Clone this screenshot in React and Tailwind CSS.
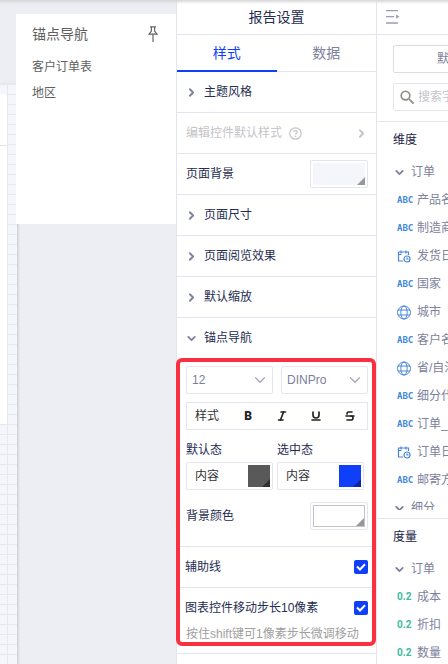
import React from "react";
import { ChevronDown, ChevronRight, Italic, Strikethrough, Underline } from "lucide-react";
import { MdSearch } from "react-icons/md";

function PinIcon() {
  return (
    <svg width="10" height="16" viewBox="0 0 10 16" fill="none" stroke="#666" strokeWidth="1.2" aria-hidden="true">
      <path d="M2 .8h6M3.400 1v4L1 8.200h8L6.600 5V1M5 8.500V16" />
    </svg>
  );
}

function CollapseIcon() {
  return (
    <svg width="14" height="14" viewBox="0 0 14 14" fill="none" stroke="#9a9cb2" strokeWidth="1.3" aria-hidden="true">
      <path d="M0 .7h12M0 6.700h8M0 13h12" />
      <path d="M10.200 4.400l3.200 2.200-3.200 2.200z" fill="#9a9cb2" stroke="none" />
    </svg>
  );
}

function GlobeIcon() {
  return (
    <svg width="15" height="15" viewBox="0 0 15 15" fill="none" stroke="#4a86d8" strokeWidth="1" aria-hidden="true">
      <circle cx="7" cy="7.500" r="6.500" />
      <ellipse cx="7" cy="7.500" rx="3.200" ry="6.500" />
      <path d="M1 5h12M1 10h12" />
    </svg>
  );
}

function DateIcon() {
  return (
    <svg width="14" height="13" viewBox="0 0 14 13" fill="none" stroke="#4a86d8" strokeWidth="1.2" aria-hidden="true">
      <path d="M6 11H1.500V2h10v3M1.500 4.500h3M4 .5v3M9 .5v3" />
      <circle cx="10" cy="9" r="3" />
      <path d="M10 7.500V9h1.500" />
    </svg>
  );
}

function HelpIcon() {
  return (
    <svg width="13" height="13" viewBox="0 0 13 13" fill="none" stroke="#c4c4c8" strokeWidth="1.2" aria-hidden="true">
      <circle cx="6.500" cy="6.500" r="5.700" />
      <path d="M4.800 5.300c0-2.300 3.400-2.200 3.400-.2 0 1.200-1.700 1.200-1.700 2.500M6.500 8.800v1.200" />
    </svg>
  );
}

function Section({ label, open }) {
  const Arrow = open ? ChevronDown : ChevronRight;
  return (
    <button
      type="button"
      aria-expanded={Boolean(open)}
      className={
        "flex h-[41px] w-full items-center gap-1.5 border-b px-2 text-left " +
        (open ? "border-transparent" : "border-[#e5e5f0]")
      }
    >
      <Arrow size={13} strokeWidth={3.4} color="#7c819c" />
      <span>{label}</span>
    </button>
  );
}

function Swatch({ label, fill }) {
  return (
    <button type="button" aria-label={label} className="h-7 w-[58px] rounded-xs border border-[#e5e5f0] p-0.5">
      <span className={"flex h-full items-end justify-end " + fill}>
        <span className="size-2 bg-[#979797] [clip-path:polygon(100%_0,100%_100%,0_100%)]" />
      </span>
    </button>
  );
}

function StateColor({ title, fill, corner }) {
  return (
    <div className="w-[87px]">
      <div className="h-6 leading-6">{title}</div>
      <button
        type="button"
        className="flex h-7 w-full items-center justify-between rounded-xs border border-[#e5e5f0] pr-0.5 pl-2 text-[#333]"
      >
        <span>内容</span>
        <span className={"flex size-[22px] items-end justify-end " + fill}>
          <span className={"size-2 [clip-path:polygon(100%_0,100%_100%,0_100%)] " + corner} />
        </span>
      </button>
    </div>
  );
}

function SelectBox({ label, value }) {
  return (
    <label className="grid h-7 w-[87px] items-center rounded-xs border border-[#e5e5f0]">
      <select
        aria-label={label}
        defaultValue={value}
        className="col-start-1 row-start-1 h-full appearance-none bg-transparent px-[5px] text-[#7c819c] outline-none"
      >
        <option>{value}</option>
      </select>
      <ChevronDown
        size={18}
        strokeWidth={1.6}
        color="#a4a6b6"
        className="pointer-events-none col-start-1 row-start-1 mr-[3px] justify-self-end"
      />
    </label>
  );
}

function CheckRow({ id, label }) {
  return (
    <div className="flex h-10 items-center justify-between pr-2 pl-2">
      <label htmlFor={id}>{label}</label>
      <span className="grid size-3.5 place-items-center">
        <input
          id={id}
          type="checkbox"
          defaultChecked
          className="col-start-1 row-start-1 size-3.5 appearance-none rounded-xs bg-[#103ffa]"
        />
        <svg
          width="10"
          height="8"
          viewBox="0 0 10 8"
          fill="none"
          stroke="#fff"
          strokeWidth="2"
          className="pointer-events-none col-start-1 row-start-1"
          aria-hidden="true"
        >
          <path d="M1 3.500l3 3L9 1.300" />
        </svg>
      </span>
    </div>
  );
}

const formats = [
  ["斜体", Italic],
  ["下划线", Underline],
  ["删除线", Strikethrough],
];

const dimensions = [
  ["abc", "产品名称"],
  ["abc", "制造商"],
  ["date", "发货日期"],
  ["abc", "国家"],
  ["geo", "城市"],
  ["abc", "客户名称"],
  ["geo", "省/自治区"],
  ["abc", "细分代码"],
  ["abc", "订单_ID"],
  ["date", "订单日期"],
  ["abc", "邮寄方式"],
];

function FieldIcon({ kind }) {
  if (kind === "geo") return <GlobeIcon />;
  if (kind === "date") return <DateIcon />;
  if (kind === "num") return <span className="font-['Roboto'] text-[10px] font-bold text-[#3ebba0]">0.2</span>;
  return <span className="font-['DejaVu_Sans_Mono',monospace] text-[9px] font-bold text-[#3f88da]">ABC</span>;
}

function Field({ kind, name }) {
  return (
    <li className="flex h-7 items-center pl-5">
      <span className="flex w-5 shrink-0">
        <FieldIcon kind={kind} />
      </span>
      {name}
    </li>
  );
}

function Group({ name }) {
  return (
    <button type="button" className="flex h-7 w-full items-center gap-[5px] pl-4">
      <ChevronDown size={13} strokeWidth={3.4} color="#7c819c" />
      {name}
    </button>
  );
}

function Canvas() {
  return (
    <main className="relative overflow-hidden bg-[#edeef3] pt-[84px]">
      <div className="h-full w-[18px] border-r border-[#d3d4d9] bg-[#f5f6fb] bg-[linear-gradient(#e7e8ed_1px,transparent_1px),linear-gradient(90deg,#e7e8ed_1px,transparent_1px)] bg-size-[10px_10px] bg-position-[7px_0px] pt-2.5 shadow-[1px_0_2px_#d8d9df]">
        <div className="h-[330px] w-[7px] rounded-r-xs bg-white pt-[51px]">
          <div className="h-px bg-[#e3e3e6]" />
        </div>
      </div>
      <aside className="absolute top-3.5 right-0 left-4 h-[210px] bg-white px-4 pt-2 text-[#606060]">
        <div className="flex h-6 items-center justify-between pr-0.5 text-sm">
          <h2>锚点导航</h2>
          <button type="button" aria-label="固定">
            <PinIcon />
          </button>
        </div>
        <nav className="flex flex-col pt-2 leading-[26px]">
          <a href="#orders">客户订单表</a>
          <a href="#region">地区</a>
        </nav>
      </aside>
    </main>
  );
}

function Settings() {
  return (
    <section className="overflow-hidden border-x border-[#e5e5f0] bg-white">
      <h1 className="flex h-[35px] items-center justify-center border-b border-[#e5e5f0] text-sm">报告设置</h1>
      <div role="tablist" className="grid h-[37px] grid-cols-2 border-b border-[#e5e5f0] text-sm">
        <button type="button" role="tab" aria-selected="true" className="-mb-px border-b-2 border-[#103ffa] text-[#103ffa]">
          样式
        </button>
        <button type="button" role="tab" aria-selected="false" className="text-[#7c819c]">
          数据
        </button>
      </div>
      <Section label="主题风格" />
      <button
        type="button"
        disabled
        className="flex h-[41px] w-full items-center border-b border-[#e5e5f0] pr-2 pl-[9px] text-[#c4c4c8]"
      >
        <span className="mr-[7px]">编辑控件默认样式</span>
        <HelpIcon />
        <ChevronRight size={13} strokeWidth={3.4} className="ml-auto" />
      </button>
      <div className="flex h-[41px] items-center justify-between border-b border-[#e5e5f0] pr-2 pl-[9px]">
        页面背景
        <Swatch label="页面背景" fill="bg-[#f5f6fb]" />
      </div>
      <Section label="页面尺寸" />
      <Section label="页面阅览效果" />
      <Section label="默认缩放" />
      <Section label="锚点导航" open />
      <div className="border-b border-[#e5e5f0] pt-[7px] pr-2 pb-4 pl-[9px]">
        <div className="flex justify-between">
          <SelectBox label="字号" value="12" />
          <SelectBox label="字体" value="DINPro" />
        </div>
        <div className="mt-2 flex h-7 items-center justify-between border border-[#e5e5f0] pr-[11px] pl-2">
          <span className="text-[#333]">样式</span>
          <div className="flex items-center gap-[22px]">
            <button type="button" aria-label="加粗" className="w-3 font-['Roboto'] font-black text-[#222]">
              B
            </button>
            {formats.map(([name, Icon]) => (
              <button key={name} type="button" aria-label={name}>
                <Icon size={12} strokeWidth={3.3} color="#222" />
              </button>
            ))}
          </div>
        </div>
        <div className="mt-2 flex gap-1">
          <StateColor title="默认态" fill="bg-[#595959]" corner="bg-[#303030]" />
          <StateColor title="选中态" fill="bg-[#103ffa]" corner="bg-[#0c2797]" />
        </div>
        <div className="mt-3 flex items-center justify-between">
          背景颜色
          <Swatch label="背景颜色" fill="border border-[#c4c4c4] bg-white" />
        </div>
      </div>
      <div className="border-b border-[#e5e5f0]">
        <CheckRow id="guides" label="辅助线" />
      </div>
      <div className="border-b border-[#e5e5f0] pb-[9px]">
        <CheckRow id="step" label="图表控件移动步长10像素" />
        <p className="-mt-1 px-[9px] leading-5 whitespace-nowrap text-[#a0a0a0]">按住shift键可1像素步长微调移动</p>
      </div>
    </section>
  );
}

function DataPanel() {
  return (
    <aside className="overflow-hidden bg-white text-[#7c819c]">
      <div className="w-[200px]">
        <div className="flex h-[35px] items-center border-b border-[#e5e5f0] pl-[9px]">
          <button type="button" aria-label="收起">
            <CollapseIcon />
          </button>
        </div>
        <div className="flex flex-col gap-2.5 border-b border-[#e5e5f0] px-4 py-2.5">
          <button type="button" className="h-7 rounded-xs border border-[#dcdce4] pr-2">
            默认分析主题
          </button>
          <label className="flex h-7 items-center gap-px rounded-xs border border-[#e5e5f0] pl-1">
            <MdSearch size={19} color="#8c8c8c" className="shrink-0" />
            <input
              type="search"
              aria-label="搜索字段"
              placeholder="搜索字段"
              className="w-full min-w-0 outline-none placeholder:text-[#c4c4c8]"
            />
          </label>
        </div>
        <div className="h-[397px] overflow-hidden border-b border-[#e5e5f0] pb-2">
          <h3 className="flex h-9 items-center pl-4 text-[#1c2345]">维度</h3>
          <div className="h-[352px] overflow-hidden">
            <Group name="订单" />
            <ul>
              {dimensions.map(([kind, name]) => (
                <Field key={name} kind={kind} name={name} />
              ))}
            </ul>
            <Group name="细分" />
          </div>
        </div>
        <h3 className="flex h-9 items-center pl-4 text-[#1c2345]">度量</h3>
        <Group name="订单" />
        <ul>
          {["成本", "折扣", "数量"].map((name) => (
            <Field key={name} kind="num" name={name} />
          ))}
        </ul>
      </div>
    </aside>
  );
}

export default function App() {
  return (
    <div className="relative grid h-screen grid-cols-[176px_201px_1fr] overflow-hidden font-['Liberation_Sans','Noto_Sans_CJK_SC',sans-serif] text-xs text-[#252d50]">
      <Canvas />
      <Settings />
      <DataPanel />
      <div className="pointer-events-none absolute inset-x-0 top-0 h-1 bg-linear-to-b from-[#d6d6d6] to-transparent" />
      <div className="pointer-events-none absolute top-[358px] left-[176px] h-[288px] w-[200px] rounded-md border-4 border-[#fa2f40]" />
    </div>
  );
}
